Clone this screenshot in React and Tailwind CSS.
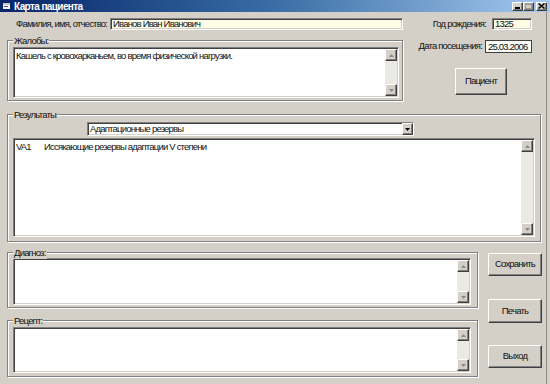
const sunken =
  'border border-t-[#808080] border-l-[#808080] border-b-white border-r-white shadow-[inset_1px_1px_0_#404040,inset_-1px_-1px_0_#d4d0c8]'
const raised =
  'border border-t-white border-l-white border-b-[#404040] border-r-[#404040] shadow-[inset_-1px_-1px_0_#808080] bg-[#d4d0c8]'

function ScrollBtn({ up }) {
  return (
    <div className={`flex h-[12px] w-[12px] shrink-0 items-center justify-center ${raised}`}>
      <svg width="5" height="3" viewBox="0 0 5 3">
        <path d={up ? 'M2.5 0L5 3H0z' : 'M0 0h5L2.5 3z'} fill="#8a8a8a" />
      </svg>
    </div>
  )
}

function VScroll() {
  return (
    <div className="flex h-full w-[12px] shrink-0 flex-col bg-[#ebe9e4]">
      <ScrollBtn up />
      <div className="flex-1" />
      <ScrollBtn />
    </div>
  )
}

function TextArea({ children, className = '' }) {
  return (
    <div className={`flex bg-white ${sunken} ${className}`}>
      <div className="flex-1 overflow-hidden pl-[2px] pt-[2px] leading-[12px]">{children}</div>
      <div className="py-[1px] pr-[1px]">
        <VScroll />
      </div>
    </div>
  )
}

function Group({ label, className = '', children }) {
  return (
    <div
      className={`relative border border-[#808080] shadow-[1px_1px_0_#fff,inset_1px_1px_0_#fff] ${className}`}
    >
      <span className="absolute -top-[6px] left-[5px] bg-[#d4d0c8] px-[1px] leading-[12px]">
        {label}
      </span>
      {children}
    </div>
  )
}

function Button({ children, className = '' }) {
  return (
    <div className={`flex items-center justify-center ${raised} ${className}`}>{children}</div>
  )
}

export default function App() {
  return (
    <div className="h-[384px] w-[550px] overflow-hidden whitespace-nowrap bg-[#d4d0c8] font-['Liberation_Sans',Arial,sans-serif] text-[9.5px] tracking-[-0.8px] text-[#111]">
      {/* Title bar */}
      <div className="flex h-[12px] items-center bg-gradient-to-r from-[#0a246a] via-[#3a6ea5] to-[#a6caf0]">
        <svg className="ml-[3px]" width="8" height="8" viewBox="0 0 8 8">
          <rect x="0" y="1" width="7" height="6" fill="#f4f4f4" />
          <rect x="0" y="1" width="7" height="2" fill="#c8c8c8" />
          <rect x="1" y="4" width="4" height="1" fill="#555" />
        </svg>
        <span className="ml-[3px] text-[10px] font-bold tracking-[-0.6px] text-white">Карта пациента</span>
        <div className="ml-auto mr-[3px] flex items-center">
          <Button className="h-[9px] w-[11px]">
            <div className="mt-[4px] h-[2px] w-[5px] bg-black" />
          </Button>
          <Button className="h-[9px] w-[11px]">
            <div className="h-[6px] w-[7px] border border-t-2 border-[#9a9a9a]" />
          </Button>
          <Button className="ml-[2px] h-[9px] w-[11px]">
            <svg width="7" height="6" viewBox="0 0 7 6">
              <path d="M0.5 0.5L6.5 5.5M6.5 0.5L0.5 5.5" stroke="#000" strokeWidth="1.5" />
            </svg>
          </Button>
        </div>
      </div>

      <div className="h-[372px] w-[547px] border-r border-[#8f8c86]">
        {/* Top section */}
        <div className="flex h-[102px]">
          <div className="ml-[7px] w-[396px]">
            <div className="mt-[6px] flex h-[12px] items-center">
              <span className="ml-[9px]">Фамилия, имя, отчество:</span>
              <div className={`ml-auto h-full w-[293px] bg-[#fdfde6] pl-[2px] leading-[10px] ${sunken}`}>
                Иванов Иван Иванович
              </div>
            </div>
            <Group label="Жалобы:" className="mt-[10px] h-[61px] pb-[2px] pl-[5px] pr-[3px] pt-[6px]">
              <TextArea className="h-full">Кашель с кровохарканьем, во время физической нагрузки.</TextArea>
            </Group>
          </div>
          <div className="flex-1">
            <div className="mt-[6px] flex h-[12px] items-center justify-end gap-[6px] pr-[14px]">
              <span>Год рождения:</span>
              <div className={`h-full w-[40px] bg-[#fdfde6] pl-[2px] leading-[10px] ${sunken}`}>1325</div>
            </div>
            <div className="mt-[10px] flex h-[13px] items-center justify-end gap-[3px] pr-[14px]">
              <span>Дата посещения:</span>
              <div className="h-full w-[47px] border border-[#404040] bg-[#fbfbf5] pl-[2px] leading-[11px]">
                25.03.2006
              </div>
            </div>
            <Button className="ml-[52px] mt-[15px] h-[27px] w-[52px]">Пациент</Button>
          </div>
        </div>

        {/* Results */}
        <Group label="Результаты" className="ml-[7px] h-[128px] w-[534px]">
          <div className={`ml-[79px] mt-[7px] flex h-[14px] w-[327px] bg-white ${sunken}`}>
            <div className="flex-1 pl-[2px] leading-[12px]">Адаптационные резервы</div>
            <div className={`h-full w-[11px] ${raised} flex items-center justify-center`}>
              <svg width="5" height="3" viewBox="0 0 5 3">
                <path d="M0 0h5L2.5 3z" fill="#000" />
              </svg>
            </div>
          </div>
          <TextArea className="ml-[5px] mt-[2px] h-[99px] w-[522px]">
            <div className="flex">
              <span className="w-[28px]">VA1</span>
              <span>Иссякающие резервы адаптации V степени</span>
            </div>
          </TextArea>
        </Group>

        {/* Bottom section */}
        <div className="flex">
          <div className="ml-[7px] w-[471px]">
            <Group label="Диагноз:" className="mt-[10px] h-[56px] pb-[2px] pl-[5px] pr-[6px] pt-[5px]">
              <TextArea className="h-full" />
            </Group>
            <Group label="Рецепт:" className="mt-[12px] h-[57px] pb-[3px] pl-[5px] pr-[6px] pt-[6px]">
              <TextArea className="h-full" />
            </Group>
          </div>
          <div className="ml-[10px] w-[54px]">
            <Button className="mt-[11px] h-[23px] w-[54px]">Сохранить</Button>
            <Button className="mt-[23px] h-[24px] w-[54px]">Печать</Button>
            <Button className="mt-[22px] h-[23px] w-[54px]">Выход</Button>
          </div>
        </div>
      </div>
    </div>
  )
}
